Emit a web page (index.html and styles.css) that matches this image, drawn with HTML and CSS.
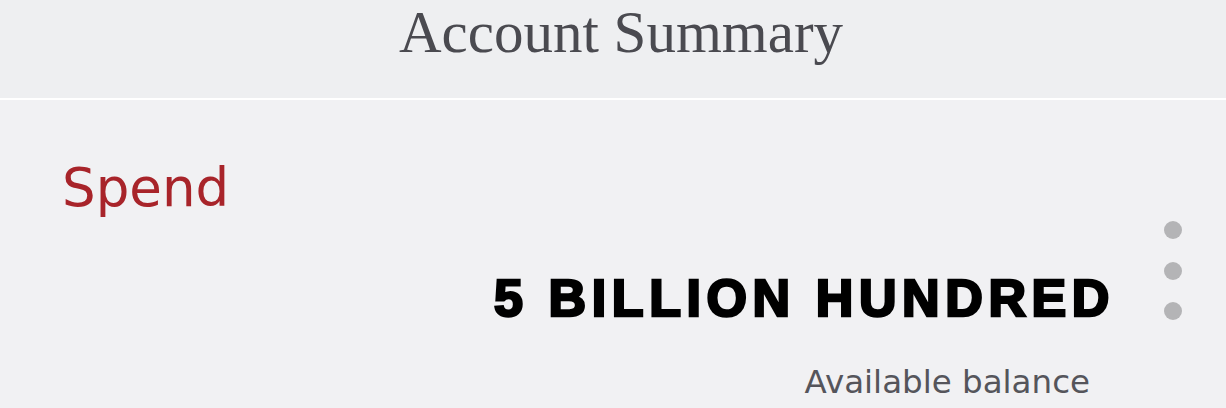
FILE: index.html
```html
<!DOCTYPE html>
<html>
<head>
<meta charset="utf-8">
<link rel="stylesheet" href="styles.css">
</head>
<body>
<div class="page">
  <header class="header">
    <h1 class="title">Account Summary</h1>
  </header>
  <section class="card">
    <div class="card-label">Spend</div>
    <div class="card-row">
      <div class="amount">5 BILLION HUNDRED</div>
      <div class="dots"><span></span><span></span><span></span></div>
    </div>
    <div class="caption">Available balance</div>
  </section>
</div>
</body>
</html>
```
FILE: styles.css
```css
html, body {
  margin: 0;
  padding: 0;
}
body {
  width: 1226px;
  height: 408px;
  overflow: hidden;
  background: #f0f0f2;
}
.page {
  display: flex;
  flex-direction: column;
  height: 408px;
}
.header {
  height: 98px;
  background: #eeeff1;
  border-bottom: 2px solid #ffffff;
  display: flex;
  justify-content: center;
}
.title {
  margin: 0 0 0 16px;
  padding-top: 1px;
  font-family: "Liberation Serif", serif;
  font-weight: normal;
  font-size: 59px;
  line-height: 62px;
  color: #4a4a50;
}
.card {
  flex: 1;
  background: #f1f1f3;
  display: flex;
  flex-direction: column;
  padding: 0 0 0 62px;
}
.card-label {
  margin-top: 58px;
  font-family: "DejaVu Sans", sans-serif;
  font-size: 53px;
  line-height: 60px;
  color: #a8242a;
}
.card-row {
  display: flex;
  justify-content: flex-end;
  align-items: flex-start;
}
.amount {
  margin-top: 50px;
  margin-right: 49px;
  font-family: "Liberation Sans", sans-serif;
  font-weight: bold;
  font-size: 52px;
  letter-spacing: 5.6px;
  -webkit-text-stroke: 2.6px #000;
  color: #000;
  line-height: 60px;
}
.dots {
  display: flex;
  flex-direction: column;
  gap: 22.5px;
  margin-top: 3px;
  margin-right: 44px;
}
.dots span {
  width: 18px;
  height: 18px;
  border-radius: 50%;
  background: #b4b4b6;
}
.caption {
  align-self: flex-end;
  margin-right: 136px;
  margin-top: 34px;
  font-family: "DejaVu Sans", sans-serif;
  font-size: 32.5px;
  line-height: 40px;
  color: #55555b;
}
```
